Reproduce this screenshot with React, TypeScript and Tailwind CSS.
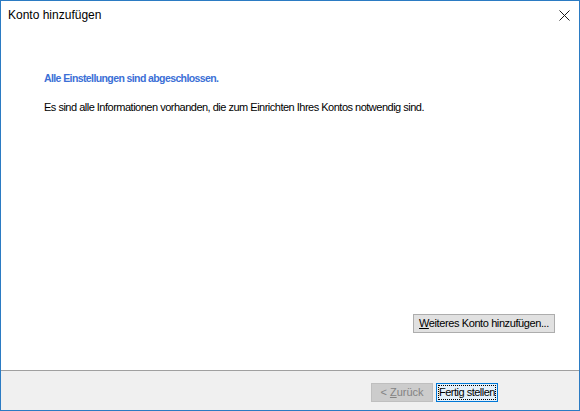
import { memo } from "react";

function App() {
    return (
        <div className="w-[580px] h-[411px] bg-white border border-[#2b7bc3] flex flex-col text-black [font-family:'Liberation_Sans',Arial,sans-serif] overflow-hidden">
            {/* Title bar */}
            <div className="h-[28px] shrink-0 flex items-center justify-between pl-[7px] pr-[8px]">
                <span className="text-[12px] text-[#000]">Konto hinzufügen</span>
                <svg width="11" height="11" viewBox="0 0 11 11" className="mr-[1px]">
                    <path d="M0.5 0.5 L10.5 10.5 M10.5 0.5 L0.5 10.5" stroke="#1a1a1a" strokeWidth="1" />
                </svg>
            </div>

            {/* Content */}
            <div className="flex-1 flex flex-col pl-[43px] pr-[24px] pt-[42px] pb-[37px]">
                <p className="text-[10.5px] font-bold text-[#3b6fd6] tracking-[-0.6px]">Alle Einstellungen sind abgeschlossen.</p>
                <p className="text-[11px] mt-[12px] tracking-[-0.5px]">
                    Es sind alle Informationen vorhanden, die zum Einrichten Ihres Kontos notwendig sind.
                </p>
                <div className="mt-auto flex justify-end">
                    <button className="h-[19px] w-[142px] bg-[#e1e1e1] border border-[#adadad] text-[11px] tracking-[-0.4px] leading-none whitespace-nowrap">
                        <span className="underline">W</span>eiteres Konto hinzufügen...
                    </button>
                </div>
            </div>

            {/* Footer */}
            <div className="h-[40px] shrink-0 bg-[#f0f0f0] border-t border-[#a0a0a0] flex items-center justify-end pr-[81px] gap-[3px] pt-[3px]">
                <button className="h-[19px] w-[62px] bg-[#cccccc] border border-[#bfbfbf] text-[11px] text-[#838383] leading-none whitespace-nowrap">
                    &lt; <span className="underline">Z</span>urück
                </button>
                <button className="h-[19px] w-[62px] bg-[#e5f1fb] border border-[#0078d7] p-[1px] leading-none">
                    <span className="flex h-full w-full items-center justify-center border border-dotted border-black text-[11px] tracking-[-0.5px] whitespace-nowrap">Fertig stellen</span>
                </button>
            </div>
        </div>
    );
}

export default memo(App);
